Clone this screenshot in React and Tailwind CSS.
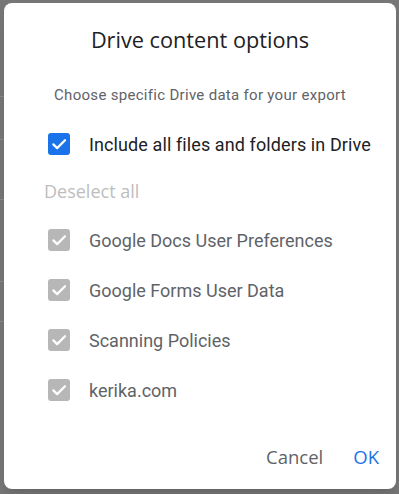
import React from "react";

const items = [
  "Google Docs User Preferences",
  "Google Forms User Data",
  "Scanning Policies",
  "kerika.com",
];

function Box({ color }) {
  return (
    <span className={`flex h-[22px] w-[22px] shrink-0 items-center justify-center rounded-[3px] ${color}`}>
      <svg width="18" height="18" viewBox="0 0 24 24" fill="none">
        <path d="M4.5 12.5l5 5L20 7" stroke="white" strokeWidth="3" strokeLinecap="round" strokeLinejoin="round" />
      </svg>
    </span>
  );
}

export default function App() {
  return (
    <div className="flex h-[494px] w-[399px] bg-[#767676] font-['Roboto',sans-serif]">
      {/* strip of the page under the overlay */}
      <div className="flex w-[4px] flex-col">
        <div className="h-[97px] border-b border-[#8a8a8a]" />
        <div className="h-[43px] border-b border-[#8a8a8a]" />
        <div className="h-[60px] border-b border-[#8a8a8a]" />
        <div className="h-[82px] border-b border-[#8a8a8a]" />
        <div className="h-[40px] border-b border-[#8a8a8a]" />
      </div>
      <div className="mt-[3px] flex h-[486px] w-[392px] flex-col rounded-[8px] bg-white shadow-lg">
        <h1 className="pt-[23px] text-center text-[21.7px] leading-[28px] text-[#202124] font-['Open_Sans',sans-serif]">
          Drive content options
        </h1>
        <p className="mt-[31px] text-center text-[15px] leading-[20px] tracking-[0.3px] text-[#5f6368]">
          Choose specific Drive data for your export
        </p>
        <div className="mt-[14px] flex h-[50px] items-center gap-[19px] pl-[44px]">
          <Box color="bg-[#1a73e8]" />
          <span className="text-[18px] tracking-[0.1px] text-[#202124]">Include all files and folders in Drive</span>
        </div>
        <div className="flex h-[44px] items-center pl-[40px] text-[18px] font-medium text-[#bdbdbd] font-['Open_Sans',sans-serif]">
          Deselect all
        </div>
        <div className="mt-[2px] flex flex-col">
          {items.map((label) => (
            <div key={label} className="flex h-[50px] items-center gap-[19px] pl-[44px]">
              <Box color="bg-[#b7b7b7]" />
              <span className="text-[18px] text-[#5f6368]">{label}</span>
            </div>
          ))}
        </div>
        <div className="mt-auto mb-[14px] flex h-[36px] items-center justify-end gap-[14px] pr-[9px] text-[18.5px] font-medium font-['Open_Sans',sans-serif]">
          <button className="px-2 text-[#5f6368]">Cancel</button>
          <button className="px-2 text-[#1a73e8]">OK</button>
        </div>
      </div>
    </div>
  );
}
